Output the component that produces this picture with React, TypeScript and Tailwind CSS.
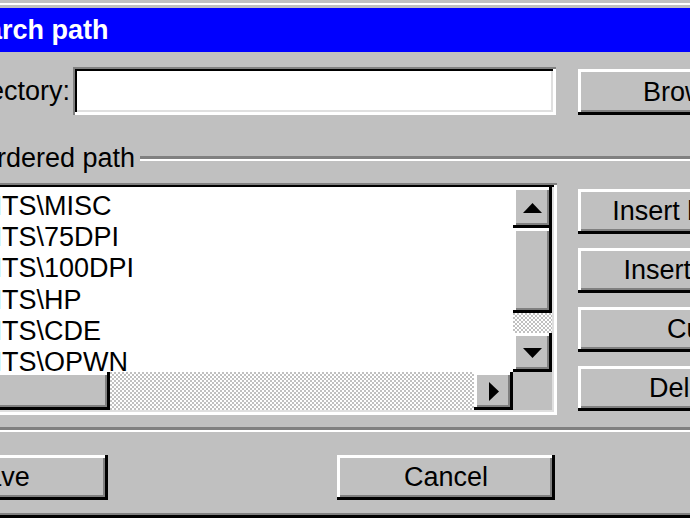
const raised =
  "bg-[#c0c0c0] shadow-[inset_-3px_-3px_0_#000,inset_3px_3px_0_#fff,inset_-5px_-5px_0_#808080]";
const sunken =
  "shadow-[inset_2px_2px_0_#808080,inset_-3px_-3px_0_#fff,inset_4px_4px_0_#000,inset_-5px_-5px_0_#dfdfdf]";
const dither =
  "bg-[image:repeating-conic-gradient(#ffffff_0_25%,#c0c0c0_0_50%)] bg-[length:4px_4px]";

const paths = ["MISC", "75DPI", "100DPI", "HP", "CDE", "OPWN", "TYPE1"];
const actions = ["Insert before", "Insert after", "Cut", "Delete"];

function Arrow({ dir }: { dir: "up" | "down" | "right" }) {
  if (dir === "right") {
    return (
      <svg width="10" height="19" viewBox="0 0 10 19">
        <polygon points="0,0 10,9.5 0,19" fill="#000" />
      </svg>
    );
  }
  return (
    <svg width="19" height="10" viewBox="0 0 19 10">
      <polygon
        points={dir === "up" ? "0,10 9.5,0 19,10" : "0,0 19,0 9.5,10"}
        fill="#000"
      />
    </svg>
  );
}

function Button({ label, className }: { label: string; className: string }) {
  return (
    <div
      className={`${raised} ${className} shrink-0 flex items-center justify-center whitespace-nowrap`}
    >
      {label}
    </div>
  );
}

export default function App() {
  return (
    <div className="w-[690px] h-[518px] overflow-hidden bg-[#c0c0c0] font-['Liberation_Sans',Arial,sans-serif] text-[27px] text-black">
      <div className="-ml-[130px] w-[1000px] bg-[#c0c0c0] pt-[3px] pl-[3px] border-b-[3px] border-black">
        <div className="border-t-2 border-l-2 border-white border-b-2 border-b-[#808080] pt-[3px] pl-[3px]">
          {/* Title bar */}
          <div className="h-[44px] bg-[#0000ff] flex items-center pl-[13px]">
            <span className="font-bold text-white whitespace-nowrap">
              Font search path
            </span>
          </div>

          {/* Body */}
          <div className="pl-[12px] pt-[15px] pb-[13px]">
            {/* Directory row */}
            <div className="flex items-start">
              <div className="w-[180px] shrink-0 h-[48px] flex items-center justify-end whitespace-nowrap">
                Directory:
              </div>
              <div className={`ml-[3px] w-[483px] h-[48px] shrink-0 bg-white ${sunken}`} />
              <Button label="Browse" className="ml-[22px] mt-[2px] w-[220px] h-[46px]" />
            </div>

            {/* Ordered path label */}
            <div className="mt-[28px] flex items-center h-[31px]">
              <div className="w-[245px] shrink-0 text-right whitespace-nowrap leading-[31px]">
                Ordered path
              </div>
              <div className="ml-[5px] flex-1 border-t-[3px] border-t-[#808080] border-b-2 border-b-white" />
            </div>

            {/* List + actions */}
            <div className="mt-[9px] flex items-start">
              <div
                className={`ml-[51px] w-[616px] h-[232px] shrink-0 bg-[#c0c0c0] pt-[4px] pl-[4px] pr-[5px] pb-[5px] flex flex-col ${sunken}`}
              >
                <div className="flex h-[185px]">
                  <div className="flex-1 bg-white overflow-hidden pt-[4px]">
                    {paths.map((p) => (
                      <div key={p} className="leading-[31.2px] whitespace-nowrap">
                        {"FONTS\\" + p}
                      </div>
                    ))}
                  </div>
                  <div className="w-[39px] flex flex-col">
                    <div className={`${raised} h-[41px] flex items-center justify-center`}>
                      <Arrow dir="up" />
                    </div>
                    <div className={`${raised} h-[85px]`} />
                    <div className={`${dither} h-[20px]`} />
                    <div className={`${raised} h-[39px] flex items-center justify-center`}>
                      <Arrow dir="down" />
                    </div>
                  </div>
                </div>
                <div className="flex h-[38px]">
                  <div className={`${raised} w-[39px]`} />
                  <div className={`${raised} w-[126px]`} />
                  <div className={`${dither} flex-1`} />
                  <div className={`${raised} w-[39px] flex items-center justify-center`}>
                    <Arrow dir="right" />
                  </div>
                  <div className="w-[39px] bg-[#c0c0c0]" />
                </div>
              </div>

              <div className="ml-[21px] pt-[6px] flex flex-col gap-[14px]">
                {actions.map((a) => (
                  <Button key={a} label={a} className="w-[220px] h-[45px]" />
                ))}
              </div>
            </div>

            {/* Separator */}
            <div className="mt-[12px] border-t-[3px] border-t-[#808080] border-b-2 border-b-white" />

            {/* Bottom buttons */}
            <div className="mt-[23px] flex">
              <Button label="Save" className="w-[218px] h-[45px]" />
              <Button label="Cancel" className="ml-[229px] w-[218px] h-[45px]" />
              <Button label="Help" className="ml-[229px] w-[218px] h-[45px]" />
            </div>
          </div>
        </div>
      </div>
    </div>
  );
}
